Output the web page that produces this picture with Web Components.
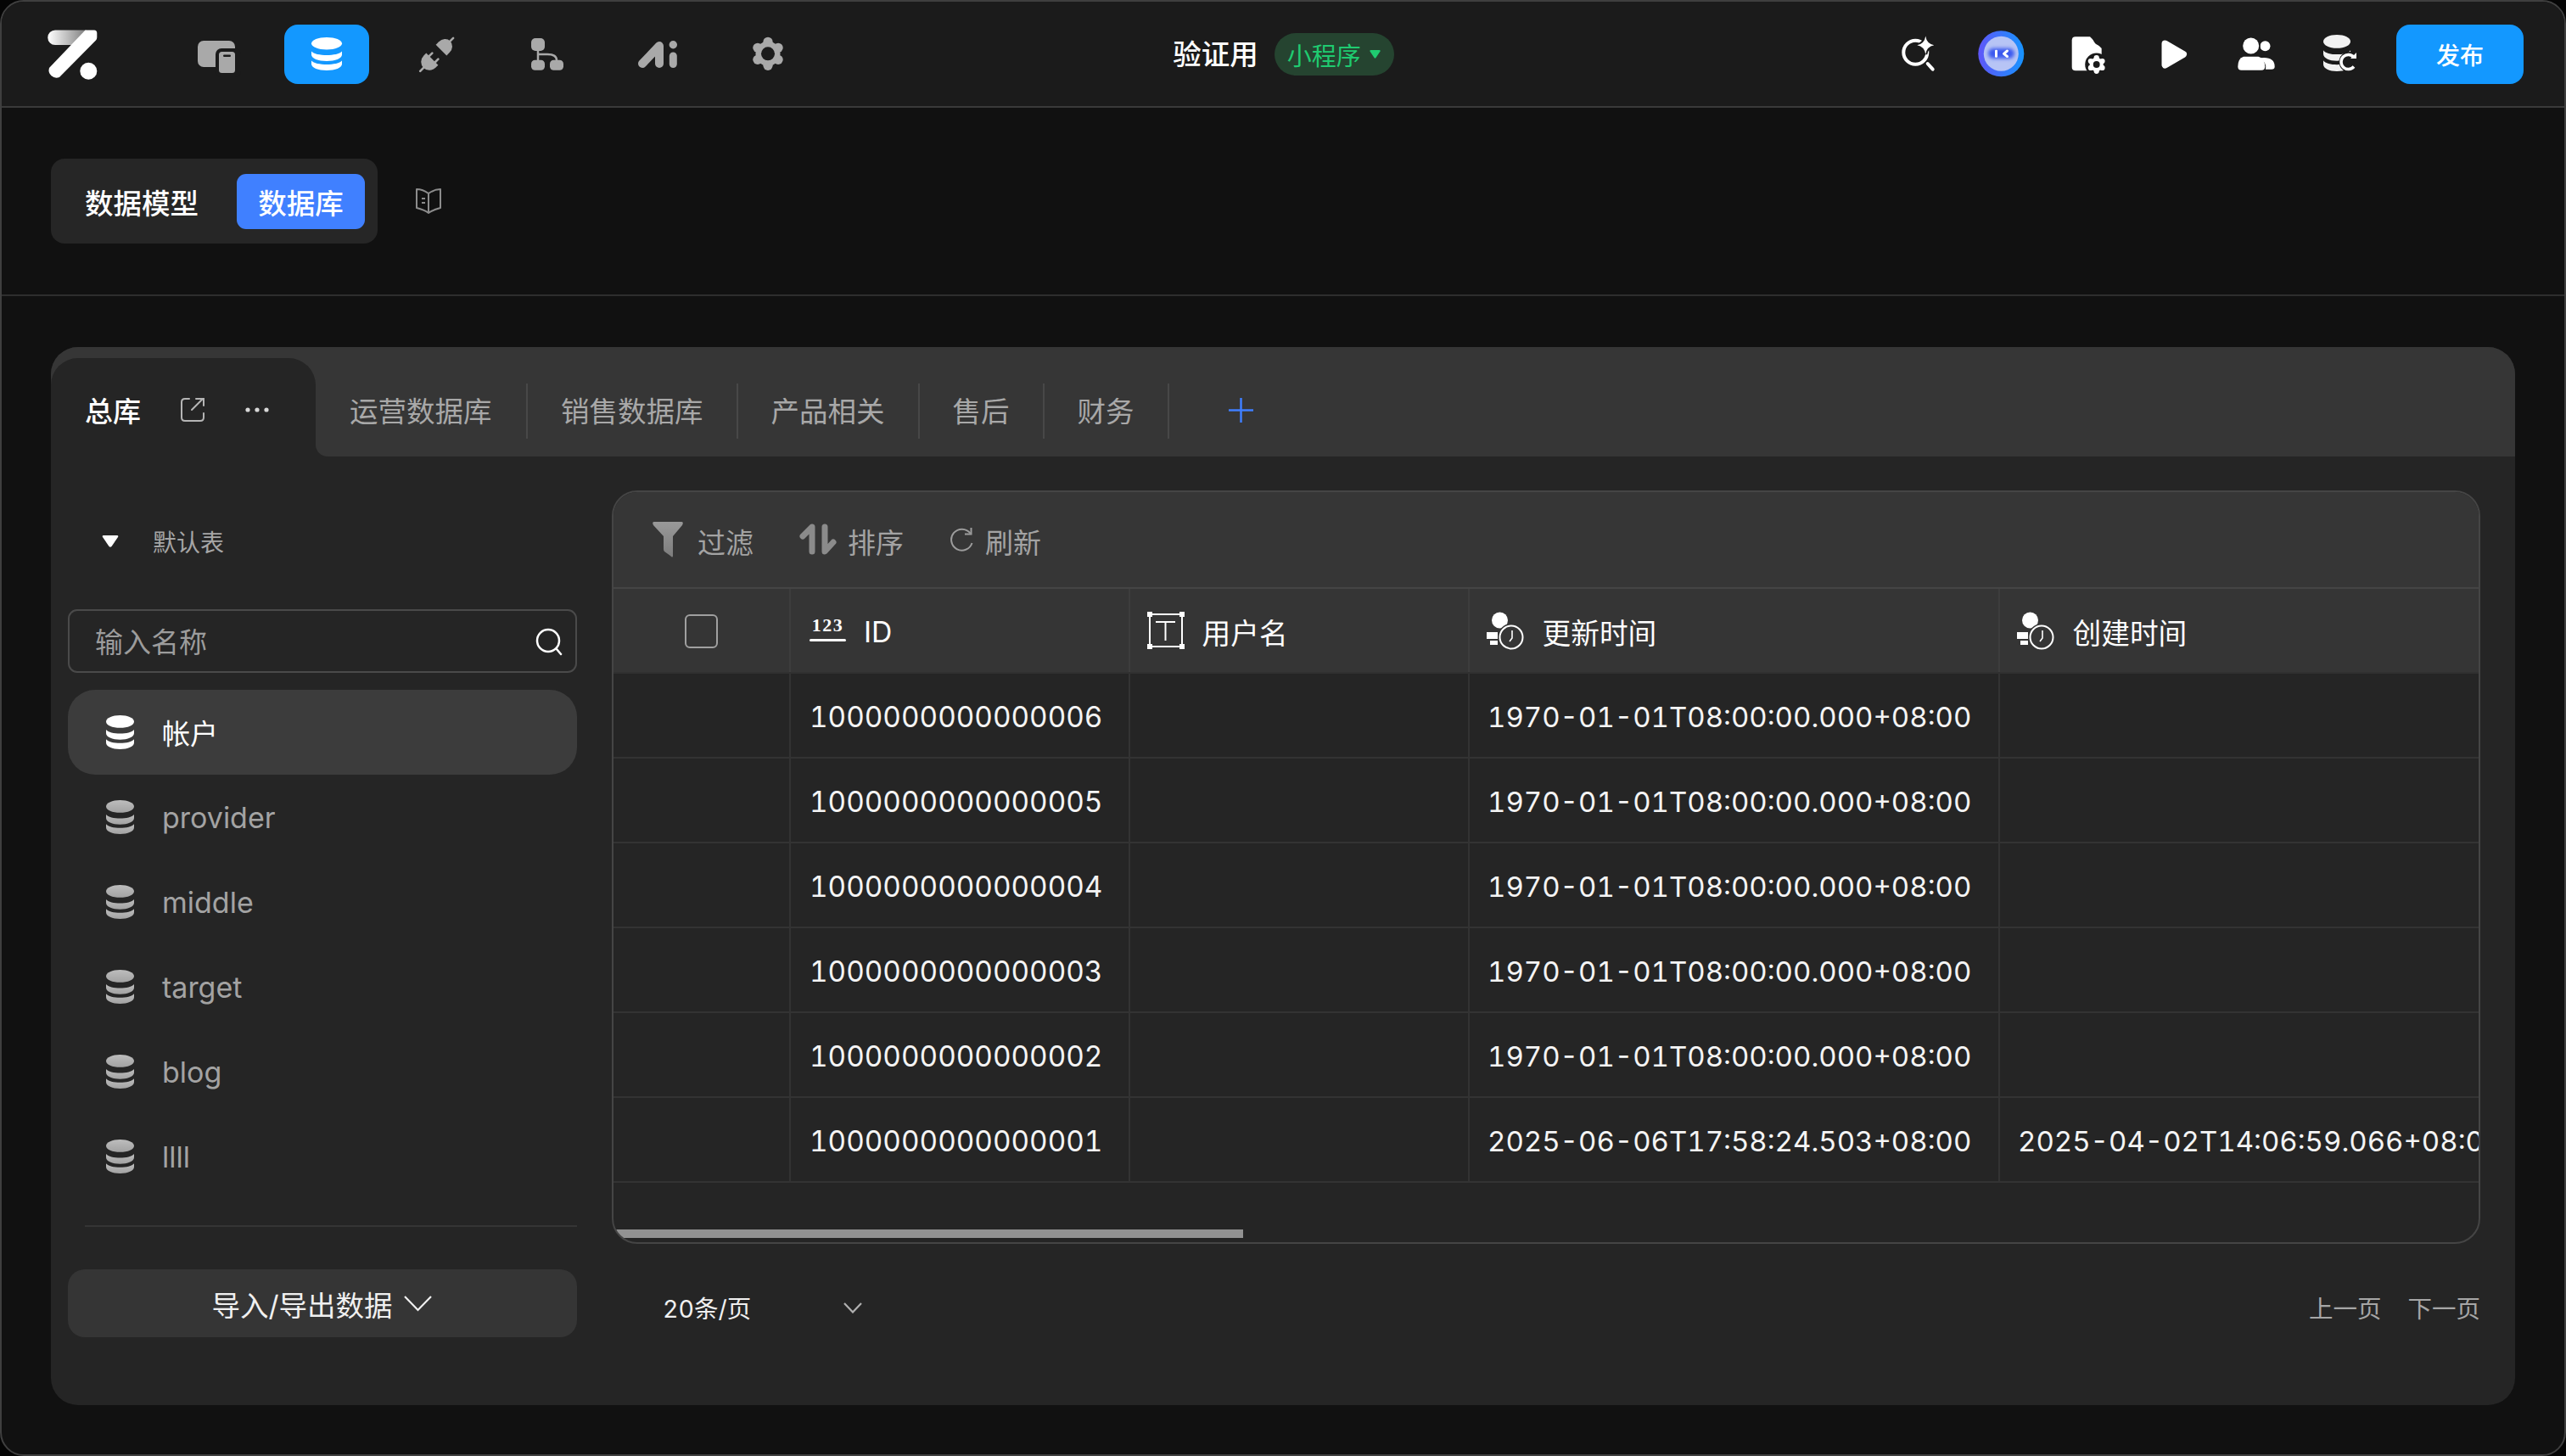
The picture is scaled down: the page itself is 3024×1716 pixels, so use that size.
<!DOCTYPE html>
<html lang="zh-CN">
<head>
<meta charset="utf-8">
<title>数据库</title>
<style>
html,body{margin:0;padding:0;background:#050505;}
body{width:3024px;height:1716px;overflow:hidden;font-family:Inter,"Noto Sans CJK SC",sans-serif;font-size:34px;color:#fff;font-variant-numeric:tabular-nums;}
</style>
</head>
<body>
<x-app></x-app>
<script>
const def=(name,css,html)=>customElements.define(name,class extends HTMLElement{
  constructor(){super();this.attachShadow({mode:'open'}).innerHTML=`<style>:host,*{box-sizing:border-box}${css}</style>${html}`;}
});
const gear=(cx,cy,k,fill,hole,holeR)=>{
  const p=[[0,-14],[12.1,-7],[12.1,7],[0,14],[-12.1,7],[-12.1,-7]];
  return `<g transform="translate(${cx} ${cy}) scale(${k})"><circle r="14.5" fill="${fill}"/>${p.map(a=>`<circle cx="${a[0]}" cy="${a[1]}" r="5.6" fill="${fill}"/>`).join('')}<circle r="${holeR}" fill="${hole}"/></g>`;
};
const db=(fill)=>`<path fill="${fill}" d="M18 0C28 0 36 3.2 36 7.2S28 14.4 18 14.4 0 11.2 0 7.2 8 0 18 0Z"/><path fill="${fill}" d="M0 16.5C5 22.5 31 22.5 36 16.5V20.5C36 25 28 28 18 28S0 25 0 20.5Z"/><path fill="${fill}" d="M0 27.5C5 33.5 31 33.5 36 27.5V31.5C36 36 28 39 18 39S0 36 0 31.5Z"/>`;

/* --- generic slot-based pieces --- */
def('x-nav-btn',`:host{display:block;width:100px;height:70px;border-radius:16px;flex:none}
:host([active]){background:#1398ff}
::slotted(svg){display:block}`,`<slot></slot>`);

def('x-tab',`:host{display:flex;align-items:center;height:65px;padding:0 39px 4px;border-right:2px solid #484848;color:#a8a8a8;font-size:33.5px;white-space:nowrap;flex:none}
:host([first]){padding-left:40px;padding-right:40.5px}`,`<slot></slot>`);

def('x-table-item',`:host{display:flex;align-items:center;height:100px;padding-left:45px;gap:33px;border-radius:32px;color:#a3a3a3;font-size:34px}
:host([active]){background:#3c3c3c;color:#fff;font-size:33px}
svg{width:33px;height:40px;flex:none}
.i{fill:url(#g)}
:host([active]) .i{fill:#fff}`,
`<svg viewBox="0 0 36 39" preserveAspectRatio="none"><defs><linearGradient id="g" x1="0" y1="0" x2="0" y2="1"><stop offset="0" stop-color="#bdbdbd"/><stop offset="1" stop-color="#a2a2a2"/></linearGradient></defs><g class="i">${db('inherit')}</g></svg><slot></slot>`);

def('x-tool',`:host{display:flex;align-items:center;color:#a3a3a3;font-size:33px;white-space:nowrap;padding-top:3px}`,`<slot></slot>`);

/* --- topbar --- */
def('x-topbar',`:host{display:grid;grid-template-columns:1fr auto 1fr;align-items:center;height:125px;background:#1b1b1b;border-bottom:2px solid #3a3a3a;padding:0 48px 0 54px}
.l{display:flex;align-items:center}
.l svg.logo{display:block;width:60px;height:60px;margin-right:89px;flex:none;margin-top:2px}
.nav{display:flex;gap:30px}
.c{display:flex;align-items:center;gap:19px;margin-right:5px}
.t{font-size:33.5px;font-weight:500;color:#fff;line-height:50px}
.badge{display:flex;align-items:center;height:50px;padding:0 16px 0 15px;gap:10px;background:#254430;border-radius:25px;color:#1fcb70;font-size:29px}
.r{display:flex;align-items:center;justify-content:flex-end}
.pub{width:150px;height:70px;margin-left:13px;border-radius:16px;background:#1398ff;color:#fff;font-size:28px;font-weight:500;display:flex;align-items:center;justify-content:center}`,
`<div class="l">
<svg class="logo" viewBox="0 0 60 60"><defs><linearGradient id="lg" x1="0" x2="1"><stop offset="0" stop-color="#fff"/><stop offset="1" stop-color="#7d7d7d"/></linearGradient></defs>
<path fill="url(#lg)" d="M9 .5H46L30 18H9A8.7 8.7 0 0 1 9 .5Z"/>
<path fill="#fff" d="M44.5.5H55Q58.3.5 58.3 4V9Q58.3 11 57 12.5L14 56A9 9 0 0 1 2 45Z"/><circle cx="48.3" cy="48.7" r="10" fill="#fff"/></svg>
<div class="nav">
<x-nav-btn><svg width="100" height="70"><rect x="28" y="19" width="44" height="31" rx="7" fill="#a9a9a9"/><rect x="49" y="28" width="30" height="34" rx="7" fill="#1b1b1b"/><rect x="53" y="32" width="19" height="25" rx="3.5" fill="#a9a9a9"/><rect x="58" y="35.5" width="9" height="2.5" rx="1.2" fill="#1b1b1b"/></svg></x-nav-btn>
<x-nav-btn active><svg width="100" height="70"><g transform="translate(32 15)">${db('#fff')}</g></svg></x-nav-btn>
<x-nav-btn><svg width="100" height="70" fill="#a9a9a9" stroke="#a9a9a9" stroke-linecap="round"><g transform="translate(41.5 43.5) rotate(45)"><path stroke="none" d="M-10-4H10V0A10 10.5 0 0 1-10 0Z"/><path stroke-width="2.6" d="M-5-4V-9M5-4V-9M0 9V16"/></g><g transform="translate(58.5 26.5) rotate(225)"><path stroke="none" d="M-9-5H9V0A9 10 0 0 1-9 0Z"/><path stroke-width="2.6" d="M0 9V15"/></g></svg></x-nav-btn>
<x-nav-btn><svg width="100" height="70" fill="#a9a9a9"><rect x="31" y="16" width="16" height="15" rx="5"/><rect x="31" y="41.7" width="16" height="12" rx="4.5"/><rect x="53" y="41.7" width="16" height="12" rx="4.5"/><path fill="none" stroke="#a9a9a9" stroke-width="2.5" d="M39 31V42M39 35H50Q61 35 61 42"/></svg></x-nav-btn>
<x-nav-btn><svg width="100" height="70" fill="#a9a9a9"><path fill="none" stroke="#a9a9a9" stroke-width="10" stroke-linecap="round" stroke-linejoin="round" d="M32 46L52 25V46"/><circle cx="68.3" cy="23.7" r="4.7"/><path stroke="#a9a9a9" stroke-width="9" stroke-linecap="round" d="M68.3 37V46.5"/></svg></x-nav-btn>
<x-nav-btn><svg width="100" height="70">${gear(50,34.3,1,'#a9a9a9','#1b1b1b',8)}</svg></x-nav-btn>
</div></div>
<div class="c"><span class="t">验证用</span><span class="badge">小程序<svg width="13" height="10" viewBox="0 0 13 10"><path fill="#1fcb70" d="M1.5 0H11.5Q13 0 12.5 1.5L7.5 9Q6.5 10.3 5.5 9L.5 1.5Q0 0 1.5 0Z"/></svg></span></div>
<div class="r">
<x-nav-btn><svg width="100" height="70" fill="none" stroke="#fff" stroke-linecap="round"><circle cx="46.3" cy="32.7" r="14" stroke-width="4"/><path stroke-width="4" d="M60.7 46L66.7 52.7"/><path fill="#fff" stroke="#1b1b1b" stroke-width="4" paint-order="stroke" d="M58.3 13.5Q59.5 22.5 68.3 24.3Q59.5 26 58.3 35Q57 26 48.3 24.3Q57 22.5 58.3 13.5Z"/></svg></x-nav-btn>
<x-nav-btn><svg width="100" height="70"><defs><linearGradient id="ai" x1="0" x2="1"><stop offset="0" stop-color="#5f56f8"/><stop offset="1" stop-color="#1794ff"/></linearGradient><filter id="b" x="-30%" y="-60%" width="160%" height="220%"><feGaussianBlur stdDeviation="2"/></filter></defs><circle cx="47.3" cy="34.3" r="27" fill="url(#ai)"/><circle cx="47.3" cy="34.3" r="20.5" fill="#b7c4f5"/><rect x="32" y="28" width="31" height="12" rx="6" fill="#3a58ef" filter="url(#b)"/><rect x="40" y="29.8" width="3" height="9" rx="1.2" fill="#fff"/><path fill="none" stroke="#fff" stroke-width="3" stroke-linecap="round" stroke-linejoin="round" d="M54.5 31L50.5 34.3L54.5 37.5"/></svg></x-nav-btn>
<x-nav-btn><svg width="100" height="70"><path fill="#fff" d="M35 14.3H52L65.7 28V54.3H35Q30.7 54.3 30.7 50V18.6Q30.7 14.3 35 14.3Z"/><path fill="#1b1b1b" d="M54.5 13L67 13V25.5Q55.8 25 54.5 13Z"/><circle cx="59.7" cy="47" r="13.5" fill="#1b1b1b"/>${gear(59.7,47,.56,'#fff','#1b1b1b',7)}</svg></x-nav-btn>
<x-nav-btn><svg width="100" height="70"><path fill="#fff" stroke="#fff" stroke-width="8" stroke-linejoin="round" d="M40.5 22.5L62 35L40.5 47.5Z"/></svg></x-nav-btn>
<x-nav-btn><svg width="100" height="70" fill="#fff"><circle cx="58.5" cy="25.3" r="6"/><path d="M57 39Q69.7 39 69.7 49.5Q69.7 52.7 66 52.7H59Q60.5 44 52 39.5Q54 39 57 39Z"/><circle cx="41.7" cy="25" r="11" fill="#1b1b1b"/><circle cx="41.7" cy="25" r="9.5"/><path d="M33 37.7H50.5Q58.3 40 58.3 49.5Q58.3 53.7 54 53.7H30.5Q26.3 53.7 26.3 49.5Q26.3 40 33 37.7Z"/></svg></x-nav-btn>
<x-nav-btn><svg width="100" height="70"><g transform="translate(27 12) scale(.89 1.1)">${db('#f2f2f2')}</g><circle cx="57.5" cy="44" r="12" fill="#1b1b1b"/><path fill="none" stroke="#fff" stroke-width="3.5" d="M63 38.5A8.5 8.5 0 1 0 63 49.5"/><path fill="#fff" d="M66 33V40H59Z"/></svg></x-nav-btn>
<div class="pub">发布</div>
</div>`);

/* --- sub bar --- */
def('x-segmented',`:host{display:flex;align-items:center;width:385px;height:100px;background:#262626;border-radius:16px;padding:0 15px 0 40px;font-size:33.5px;font-weight:500;color:#fff;flex:none}
.m{margin-right:45px;white-space:nowrap}
.a{width:151px;height:65px;background:#4080ff;border-radius:11px;display:flex;align-items:center;justify-content:center}`,
`<span class="m">数据模型</span><span class="a">数据库</span>`);
def('x-subbar',`:host{display:flex;align-items:center;height:222px;padding:0 0 0 58px;border-bottom:2px solid #2e2e2e}
svg{margin-left:45px;display:block}`,
`<x-segmented></x-segmented><svg width="30" height="30" viewBox="0 0 30 30" fill="none" stroke="#8c8c8c" stroke-width="2"><path stroke-linejoin="round" d="M15 6C11 3 5 1 1 1V23C5 24 11 26 15 29C19 26 25 24 29 23V1C25 1 19 3 15 6V29"/><path d="M7 12H11M7 17H11"/></svg>`);

/* --- tabs --- */
def('x-db-tabs',`:host{display:flex;height:129px;flex:none}
.left{width:312px;background:#363636;padding-top:13px;flex:none}
.active{height:116px;background:#252525;border-radius:32px 32px 0 0;display:flex;align-items:center;padding:6px 0 0 40px;font-weight:500;font-size:33px;color:#fff}
.active span{width:70px;white-space:nowrap}
.active .ext{margin-left:42px;display:block}
.active .dots{margin-left:47px;display:block}
.strip{flex:1;background:#363636;border-bottom-left-radius:14px;display:flex;align-items:center;padding-top:21px}
.plus{margin-left:70px;display:block;margin-top:-2px}`,
`<div class="left"><div class="active"><span>总库</span>
<svg class="ext" width="30" height="30" viewBox="0 0 30 30" fill="none" stroke="#b5b5b5" stroke-width="2" stroke-linecap="round"><path d="M11 2H6Q2 2 2 6V24Q2 28 6 28H24Q28 28 28 24V19"/><path d="M14 15L27 2M19 2H28V10"/></svg>
<svg class="dots" width="28" height="8" viewBox="0 0 28 8" fill="#d8d8d8"><circle cx="3" cy="4" r="2.6"/><circle cx="14" cy="4" r="2.6"/><circle cx="25" cy="4" r="2.6"/></svg></div></div>
<div class="strip"><x-tab first>运营数据库</x-tab><x-tab>销售数据库</x-tab><x-tab>产品相关</x-tab><x-tab>售后</x-tab><x-tab>财务</x-tab>
<svg class="plus" width="29" height="29" viewBox="0 0 29 29" stroke="#3f7fff" stroke-width="2.5"><path d="M14.5 0V29M0 14.5H29"/></svg></div>`);

/* --- sidebar --- */
def('x-db-sidebar',`:host{display:block;width:600px;margin-left:20px;padding-top:51px;flex:none}
.sec{display:flex;align-items:center;height:100px;padding:0 0 2px 40px;gap:40px;font-size:28px;color:#a6a6a6;margin-bottom:29px}
.search{display:flex;align-items:center;justify-content:space-between;height:75px;border:2px solid #4a4a4a;border-radius:11px;padding:0 14px 2px 30px;color:#9c9c9c;font-size:33px;margin-bottom:20px}
.search svg{margin-top:2px}
.div{height:2px;background:#353535;margin:31px 0 50px 20px}
.imp{display:flex;align-items:center;justify-content:center;gap:13px;height:80px;padding-right:2px;background:#353535;border-radius:20px;color:#f0f0f0;font-size:33.5px}`,
`<div class="sec"><svg width="20" height="14" viewBox="0 0 20 14"><path fill="#fff" d="M2 0H18Q20 0 19 2L11.5 13Q10 14.5 8.5 13L1 2Q0 0 2 0Z"/></svg><span>默认表</span></div>
<div class="search"><span>输入名称</span><svg width="34" height="34" viewBox="0 0 34 34" fill="none" stroke="#fff" stroke-width="2.5" stroke-linecap="round"><circle cx="16" cy="16" r="13"/><path d="M26 26L31 32"/></svg></div>
<x-table-item active>帐户</x-table-item>
<x-table-item>provider</x-table-item>
<x-table-item>middle</x-table-item>
<x-table-item>target</x-table-item>
<x-table-item>blog</x-table-item>
<x-table-item>llll</x-table-item>
<div class="div"></div>
<div class="imp"><span>导入/导出数据</span><svg width="33" height="20" viewBox="0 0 33 20" fill="none" stroke="#f0f0f0" stroke-width="2.2"><path d="M1 2L16.5 18L32 2"/></svg></div>`);

/* --- table --- */
const D70='1970-01-01T08:00:00.000+08:00';
const ROWS=[
['1000000000000006','',D70,''],
['1000000000000005','',D70,''],
['1000000000000004','',D70,''],
['1000000000000003','',D70,''],
['1000000000000002','',D70,''],
['1000000000000001','','2025-06-06T17:58:24.503+08:00','2025-04-02T14:06:59.066+08:00']];
const dateIcon=`<svg width="45" height="45" viewBox="0 0 45 45"><circle cx="15.5" cy="10" r="9.5" fill="#fff"/><rect x="0" y="24" width="13" height="8" fill="#fff"/><rect x="4" y="34" width="9" height="5" fill="#fff"/><circle cx="29" cy="30" r="16" fill="#363636"/><circle cx="29" cy="30" r="13.5" fill="none" stroke="#fff" stroke-width="2"/><path fill="none" stroke="#fff" stroke-width="1.6" d="M30 22V31L27 35"/></svg>`;
def('x-data-table',`:host{display:block;position:relative;width:2202px;height:888px;border:2px solid #454545;border-radius:30px;overflow:hidden;background:#252525;font-size:33px;flex:none}
.tools{display:flex;align-items:center;height:112px;background:#363636;padding-left:45px}
.tools svg{display:block;flex:none}
.sep{height:2px;background:#454545}
.row{display:grid;grid-template-columns:209px 400px 400px 625px 800px;height:100px;border-bottom:2px solid #333;white-space:nowrap}
.head{background:#353535;border-bottom:2px solid #303030}
.cell{border-right:2px solid #333;display:flex;align-items:center;padding:3px 0 0 21px;color:#f4f4f4;overflow:visible}
.cell.id{font-size:33.3px;padding-left:22px}
.head .cell{border-right-color:#3d3d3d;color:#fff;gap:20.5px;padding:2px 0 0 20px;font-size:33.7px}
.head .cell svg{margin-top:-2px}
.head .cb{padding:2px 0 0;justify-content:center}
.box{display:block;width:39px;height:40px;border:2px solid #a0a0a0;border-radius:6px}
.n123{display:flex;flex-direction:column;align-items:stretch;width:43px;height:33px;font:bold 22px/23px "Liberation Serif",serif;letter-spacing:1.5px;text-align:center;color:#fff;margin-top:-6px}
.n123 i{display:block;height:3px;background:#fff;border-radius:2px;margin-top:5px}
.bar{position:absolute;left:1px;top:869px;width:741px;height:10px;background:#929292}`,
`<div class="tools">
<svg width="38" height="43" viewBox="0 0 38 43"><defs><linearGradient id="fg" x1="0" x2="0" y1="0" y2="1"><stop offset="0" stop-color="#999"/><stop offset="1" stop-color="#7d7d7d"/></linearGradient></defs><path fill="url(#fg)" d="M3 0H35Q38 0 36 4L25 17V40Q25 43 22 40L15 35Q14 34 14 32V17L2 4Q0 0 3 0Z"/></svg>
<x-tool style="margin-left:16px">过滤</x-tool>
<svg style="margin-left:54px" width="44" height="38" viewBox="0 0 44 38" fill="none" stroke="#8b8b8b" stroke-width="7" stroke-linecap="round" stroke-linejoin="round"><path d="M15 33V4L4 15"/><path d="M30 4V33L40 22"/></svg>
<x-tool style="margin-left:13px">排序</x-tool>
<svg style="margin-left:54px" width="30" height="30" viewBox="0 0 30 30" fill="none" stroke="#9c9c9c" stroke-width="2"><path d="M24.5 7.5A12.5 12.5 0 1 0 26.5 19"/><path d="M25.5 1V8.5H18"/></svg>
<x-tool style="margin-left:12px">刷新</x-tool>
</div><div class="sep"></div>
<div class="row head">
<div class="cell cb"><span class="box"></span></div>
<div class="cell" style="gap:21px;padding-left:22px"><span class="n123">123<i></i></span><span>ID</span></div>
<div class="cell"><svg width="44" height="44" viewBox="0 0 44 44" fill="none" stroke="#fff" stroke-width="2"><rect x="3" y="3" width="38" height="38"/><path d="M10 12H33M21.5 12V34"/><g fill="#fff" stroke="none"><rect width="6" height="6"/><rect x="38" width="6" height="6"/><rect y="38" width="6" height="6"/><rect x="38" y="38" width="6" height="6"/></g></svg><span>用户名</span></div>
<div class="cell">${dateIcon}<span>更新时间</span></div>
<div class="cell">${dateIcon}<span>创建时间</span></div>
</div>
${ROWS.map(r=>`<div class="row"><div class="cell"></div>${r.map((c,i)=>`<div class="cell${i===0?' id':''}">${c}</div>`).join('')}</div>`).join('')}
<div class="bar"></div>`);

/* --- pager --- */
def('x-pager',`:host{display:flex;align-items:center;justify-content:space-between;height:80px;margin-top:34px;padding-left:60px;width:2202px}
.size{display:flex;align-items:center;width:235px;justify-content:space-between;font-size:28.5px;color:#f0f0f0}
.size svg{margin-top:2px}
.nav{display:flex;gap:31px;font-size:28.5px;color:#a6a6a6}`,
`<div class="size"><span>20条/页</span><svg width="22" height="13" viewBox="0 0 22 13" fill="none" stroke="#b0b0b0" stroke-width="2.2"><path d="M1 1L11 11.5L21 1"/></svg></div>
<div class="nav"><span>上一页</span><span>下一页</span></div>`);

/* --- card + app --- */
def('x-db-card',`:host{display:flex;flex-direction:column;width:2904px;height:1247px;margin:60px 0 0 58px;background:#252525;border-radius:32px;overflow:hidden}
.body{display:flex;flex:1}
.main{margin-left:41px;padding-top:40px}`,
`<x-db-tabs></x-db-tabs><div class="body"><x-db-sidebar></x-db-sidebar><div class="main"><x-data-table></x-data-table><x-pager></x-pager></div></div>`);
def('x-app',`:host{display:block;width:3024px;height:1716px;border:2px solid #3f3f3f;border-radius:28px;background:#111;overflow:hidden}`,
`<x-topbar></x-topbar><x-subbar></x-subbar><x-db-card></x-db-card>`);
</script>
</body>
</html>
